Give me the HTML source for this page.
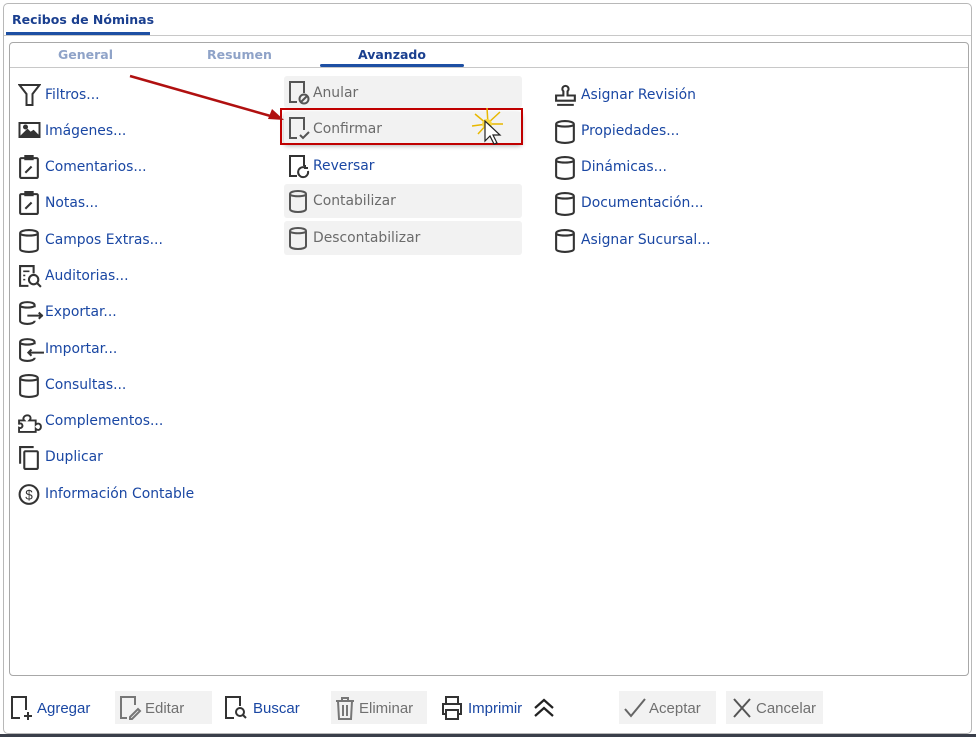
<!DOCTYPE html>
<html><head><meta charset="utf-8"><style>
*{margin:0;padding:0;box-sizing:border-box}
body{width:976px;height:737px;background:#fff;position:relative;overflow:hidden;font-family:"DejaVu Sans",Verdana,sans-serif}
.abs{position:absolute}
.it{position:absolute;height:30px;display:flex;align-items:center;font-size:13.9px;color:#1a47a3;white-space:nowrap}
.it svg{position:absolute;left:0;top:4px}
.it span{position:absolute;left:27px;top:8px}
.g{background:#f2f2f2;color:#6b6b6b;border-radius:3px}
.g span{top:9px}
.bt{position:absolute;top:691px;height:33px;display:flex;align-items:center;font-family:"Liberation Sans",Arial,sans-serif;font-size:15px;color:#1a47a3}
.bt span{position:relative;top:1px}
.bt.d{background:#f2f2f2;color:#707070}
</style></head><body>
<div class="abs" style="left:3px;top:3px;width:969px;height:731px;border:1px solid #b8b8b8;border-radius:5px"></div>
<div class="abs" style="left:0;top:734px;width:976px;height:3px;background:#3a3f4a"></div>
<div class="abs" style="left:12px;top:12px;font-size:12.5px;font-weight:bold;color:#1a3f8f">Recibos de Nóminas</div>
<div class="abs" style="left:6px;top:32px;width:144px;height:3px;background:#1d4fa3"></div>
<div class="abs" style="left:4px;top:35px;width:967px;height:1px;background:#c8c8c8"></div>
<div class="abs" style="left:9px;top:42px;width:960px;height:634px;border:1px solid #a8a8a8;border-radius:4px"></div>
<div class="abs" style="left:58px;top:47px;font-size:12.5px;font-weight:bold;color:#8fa3c8">General</div>
<div class="abs" style="left:207px;top:47px;font-size:12.5px;font-weight:bold;color:#8fa3c8">Resumen</div>
<div class="abs" style="left:358px;top:47px;font-size:12.5px;font-weight:bold;color:#1a3f8f">Avanzado</div>
<div class="abs" style="left:320px;top:64px;width:144px;height:3px;background:#1d4fa3;border-radius:2px"></div>
<div class="abs" style="left:10px;top:67px;width:958px;height:1px;background:#c8c8c8"></div>

<!-- column 1 -->
<div class="it" style="left:18px;top:79px"><svg width="23" height="24" viewBox="0 0 22 24" fill="none" stroke="#333" stroke-width="2"><path d="M1 2h20l-7 9v11h-6V11z"/></svg><span>Filtros...</span></div>
<div class="it" style="left:18px;top:115px"><svg width="23" height="22" viewBox="0 0 22 22" fill="none" stroke="#333" stroke-width="2"><rect x="1" y="4" width="20" height="14"/><path d="M4 16l5-5 3 3 3-2 4 4z" fill="#333"/><circle cx="7" cy="8" r="1.5" fill="#333"/></svg><span>Imágenes...</span></div>
<div class="it" style="left:18px;top:151px"><svg width="23" height="25" viewBox="0 0 22 24" fill="none" stroke="#333" stroke-width="2"><rect x="2" y="3" width="17" height="19" rx="1"/><rect x="7" y="1" width="7" height="3" fill="#333"/><path d="M7 17l6-6"/></svg><span>Comentarios...</span></div>
<div class="it" style="left:18px;top:187px"><svg width="23" height="25" viewBox="0 0 22 24" fill="none" stroke="#333" stroke-width="2"><rect x="2" y="3" width="17" height="19" rx="1"/><rect x="7" y="1" width="7" height="3" fill="#333"/><path d="M7 17l6-6"/></svg><span>Notas...</span></div>
<div class="it" style="left:18px;top:224px"><svg width="23" height="25" viewBox="0 0 22 24" fill="none" stroke="#333" stroke-width="2"><path d="M2 5c0-4 17-4 17 0v15c0 4-17 4-17 0z M2 5c0 3 17 3 17 0"/></svg><span>Campos Extras...</span></div>
<div class="it" style="left:18px;top:260px"><svg width="25" height="25" viewBox="0 0 24 24" fill="none" stroke="#333" stroke-width="2"><path d="M10 21H2V2h13v7"/><path d="M5 7h6M5 11h2M5 15h2" stroke-width="1.5"/><circle cx="15" cy="15" r="4.5"/><path d="M18 18l4 4"/></svg><span>Auditorias...</span></div>
<div class="it" style="left:18px;top:296px"><svg width="27" height="25" viewBox="0 0 26 24" fill="none" stroke="#333" stroke-width="2"><path d="M16 7V5c0-4-14-4-14 0v15c0 4 14 4 14 0 M2 5c0 3 14 3 14 0"/><path d="M9 15h15M20 12l3 3-3 3"/></svg><span>Exportar...</span></div>
<div class="it" style="left:18px;top:333px"><svg width="27" height="25" viewBox="0 0 26 24" fill="none" stroke="#333" stroke-width="2"><path d="M16 7V5c0-4-14-4-14 0v15c0 4 14 4 14 0 M2 5c0 3 14 3 14 0"/><path d="M10 15h15M13 12l-3 3 3 3"/></svg><span>Importar...</span></div>
<div class="it" style="left:18px;top:369px"><svg width="23" height="25" viewBox="0 0 22 24" fill="none" stroke="#333" stroke-width="2"><path d="M2 5c0-4 17-4 17 0v15c0 4-17 4-17 0z M2 5c0 3 17 3 17 0"/></svg><span>Consultas...</span></div>
<div class="it" style="left:18px;top:405px"><svg width="25" height="25" viewBox="0 0 24 24" fill="none" stroke="#333" stroke-width="1.8"><path d="M1 11h5c-2-2 0-5 3-5s4 3 2 5h6v4c2-2 5-1 5 2s-3 4-5 2v3H1v-4c2 1 4-1 3-3s-3-1-3 0z"/></svg><span>Complementos...</span></div>
<div class="it" style="left:18px;top:441px"><svg width="23" height="25" viewBox="0 0 22 24" fill="none" stroke="#333" stroke-width="2"><path d="M2 18V2h13"/><rect x="6" y="6" width="13" height="17" rx="1"/></svg><span>Duplicar</span></div>
<div class="it" style="left:18px;top:478px"><svg width="23" height="25" viewBox="0 0 22 24" fill="none" stroke="#333" stroke-width="2"><circle cx="10.5" cy="12" r="9"/><text x="10.5" y="17" font-size="13" text-anchor="middle" fill="#333" stroke="none" font-family="Liberation Sans">$</text></svg><span>Información Contable</span></div>

<!-- column 2 -->
<div class="it g" style="left:284px;top:76px;width:238px;height:32px"><svg style="left:4px;top:5px" width="24" height="24" viewBox="0 0 24 24" fill="none" stroke="#555" stroke-width="2"><path d="M9 21H2V1h14v11"/><circle cx="16" cy="18" r="4.5"/><path d="M13 21l6-6"/></svg><span style="left:29px">Anular</span></div>
<div class="it g" style="left:284px;top:112px;width:238px;height:32px;box-shadow:0 2px 5px rgba(0,0,0,.3)"><svg style="left:4px;top:5px" width="24" height="24" viewBox="0 0 24 24" fill="none" stroke="#555" stroke-width="2"><path d="M9 21H2V1h14v12"/><path d="M12 18l3 3 6-6"/></svg><span style="left:29px">Confirmar</span></div>
<div class="abs" style="left:280px;top:108px;width:243px;height:37px;border:2px solid #c00000"></div>
<div class="it" style="left:284px;top:150px;width:238px;height:32px;color:#1a47a3"><svg style="left:4px;top:5px" width="24" height="26" viewBox="0 0 24 26" fill="none" stroke="#333" stroke-width="2"><path d="M9 21H2V1h14v10"/><path d="M20 16a5 5 0 1 1-3-3.5M17 10v3h3"/></svg><span style="left:29px">Reversar</span></div>
<div class="it g" style="left:284px;top:184px;width:238px;height:34px"><svg style="left:4px;top:5px" width="22" height="24" viewBox="0 0 22 24" fill="none" stroke="#555" stroke-width="2"><path d="M2 5c0-4 16-4 16 0v15c0 4-16 4-16 0z M2 5c0 3 16 3 16 0"/></svg><span style="left:29px">Contabilizar</span></div>
<div class="it g" style="left:284px;top:221px;width:238px;height:34px"><svg style="left:4px;top:5px" width="22" height="24" viewBox="0 0 22 24" fill="none" stroke="#555" stroke-width="2"><path d="M2 5c0-4 16-4 16 0v15c0 4-16 4-16 0z M2 5c0 3 16 3 16 0"/></svg><span style="left:29px">Descontabilizar</span></div>
<svg class="abs" style="left:470px;top:106px" width="40" height="45" viewBox="0 0 40 45"><g stroke="#e8b800" stroke-width="1.5"><path d="M17 2l1 16M5 8l12 10M2 20l15-2M30 6l-13 12M33 18l-16 0M8 28l9-10M26 28l-9-10"/></g><circle cx="17" cy="18" r="5" fill="#f8d840"/><path d="M15 15v20l5-5 4 8 3-1-4-8h7z" fill="#fff" stroke="#222" stroke-width="1.2"/></svg>
<svg class="abs" style="left:128px;top:72px" width="160" height="50"><path d="M2 4L146 45" stroke="#b01010" stroke-width="2.5"/><path d="M156 48l-16-1 4-10z" fill="#b01010"/></svg>

<!-- column 3 -->
<div class="it" style="left:554px;top:79px"><svg width="25" height="25" viewBox="0 0 24 24" fill="none" stroke="#333" stroke-width="2"><path d="M9 12V8a3 3 0 1 1 4 0v4h7v5H2v-5zM3 21h16"/></svg><span style="left:27px">Asignar Revisión</span></div>
<div class="it" style="left:554px;top:115px"><svg width="23" height="25" viewBox="0 0 22 24" fill="none" stroke="#333" stroke-width="2"><path d="M2 5c0-4 17-4 17 0v15c0 4-17 4-17 0z M2 5c0 3 17 3 17 0"/></svg><span style="left:27px">Propiedades...</span></div>
<div class="it" style="left:554px;top:151px"><svg width="23" height="25" viewBox="0 0 22 24" fill="none" stroke="#333" stroke-width="2"><path d="M2 5c0-4 17-4 17 0v15c0 4-17 4-17 0z M2 5c0 3 17 3 17 0"/></svg><span style="left:27px">Dinámicas...</span></div>
<div class="it" style="left:554px;top:187px"><svg width="23" height="25" viewBox="0 0 22 24" fill="none" stroke="#333" stroke-width="2"><path d="M2 5c0-4 17-4 17 0v15c0 4-17 4-17 0z M2 5c0 3 17 3 17 0"/></svg><span style="left:27px">Documentación...</span></div>
<div class="it" style="left:554px;top:224px"><svg width="23" height="25" viewBox="0 0 22 24" fill="none" stroke="#333" stroke-width="2"><path d="M2 5c0-4 17-4 17 0v15c0 4-17 4-17 0z M2 5c0 3 17 3 17 0"/></svg><span style="left:27px">Asignar Sucursal...</span></div>

<!-- bottom -->
<div class="bt" style="left:10px;width:90px"><svg width="24" height="26" viewBox="0 0 24 26" fill="none" stroke="#333" stroke-width="2"><path d="M10 23H2V2h14v13M18 17v8M14 21h8"/></svg><span style="margin-left:3px">Agregar</span></div>
<div class="bt d" style="left:115px;width:97px"><svg style="margin-left:4px" width="24" height="26" viewBox="0 0 24 26" fill="none" stroke="#777" stroke-width="2"><path d="M8 23H2V2h14v8M11 22l8-8 2 2-8 8h-2z"/></svg><span style="margin-left:2px">Editar</span></div>
<div class="bt" style="left:224px;width:90px"><svg width="26" height="26" viewBox="0 0 26 26" fill="none" stroke="#333" stroke-width="2"><path d="M10 23H2V2h14v9"/><circle cx="16" cy="17" r="4"/><path d="M19 20l3 3"/></svg><span style="margin-left:3px">Buscar</span></div>
<div class="bt d" style="left:331px;width:96px"><svg style="margin-left:2px" width="24" height="26" viewBox="0 0 24 26" fill="none" stroke="#777" stroke-width="2"><path d="M3 6h18M9 6V3h6v3M5 6l1 18h12l1-18M10 10v11M14 10v11"/></svg><span style="margin-left:2px">Eliminar</span></div>
<div class="bt" style="left:441px;width:130px"><svg width="22" height="26" viewBox="0 0 22 26" fill="none" stroke="#333" stroke-width="2"><path d="M5 9V2h12v7M5 19H2V9h18v10h-3M5 15h12v9H5z"/></svg><span style="margin-left:5px">Imprimir</span><svg style="margin-left:10px" width="24" height="24" viewBox="0 0 24 24" fill="none" stroke="#222" stroke-width="2.2"><path d="M3 12l9-8 9 8M3 20l9-8 9 8"/></svg></div>
<div class="bt d" style="left:619px;width:97px"><svg style="margin-left:4px" width="24" height="24" viewBox="0 0 24 24" fill="none" stroke="#666" stroke-width="2"><path d="M2 13l6 7L22 3"/></svg><span style="margin-left:2px">Aceptar</span></div>
<div class="bt d" style="left:726px;width:97px"><svg style="margin-left:4px" width="24" height="24" viewBox="0 0 24 24" fill="none" stroke="#555" stroke-width="2"><path d="M4 3l16 18M20 3L4 21"/></svg><span style="margin-left:2px">Cancelar</span></div>
</body></html>
